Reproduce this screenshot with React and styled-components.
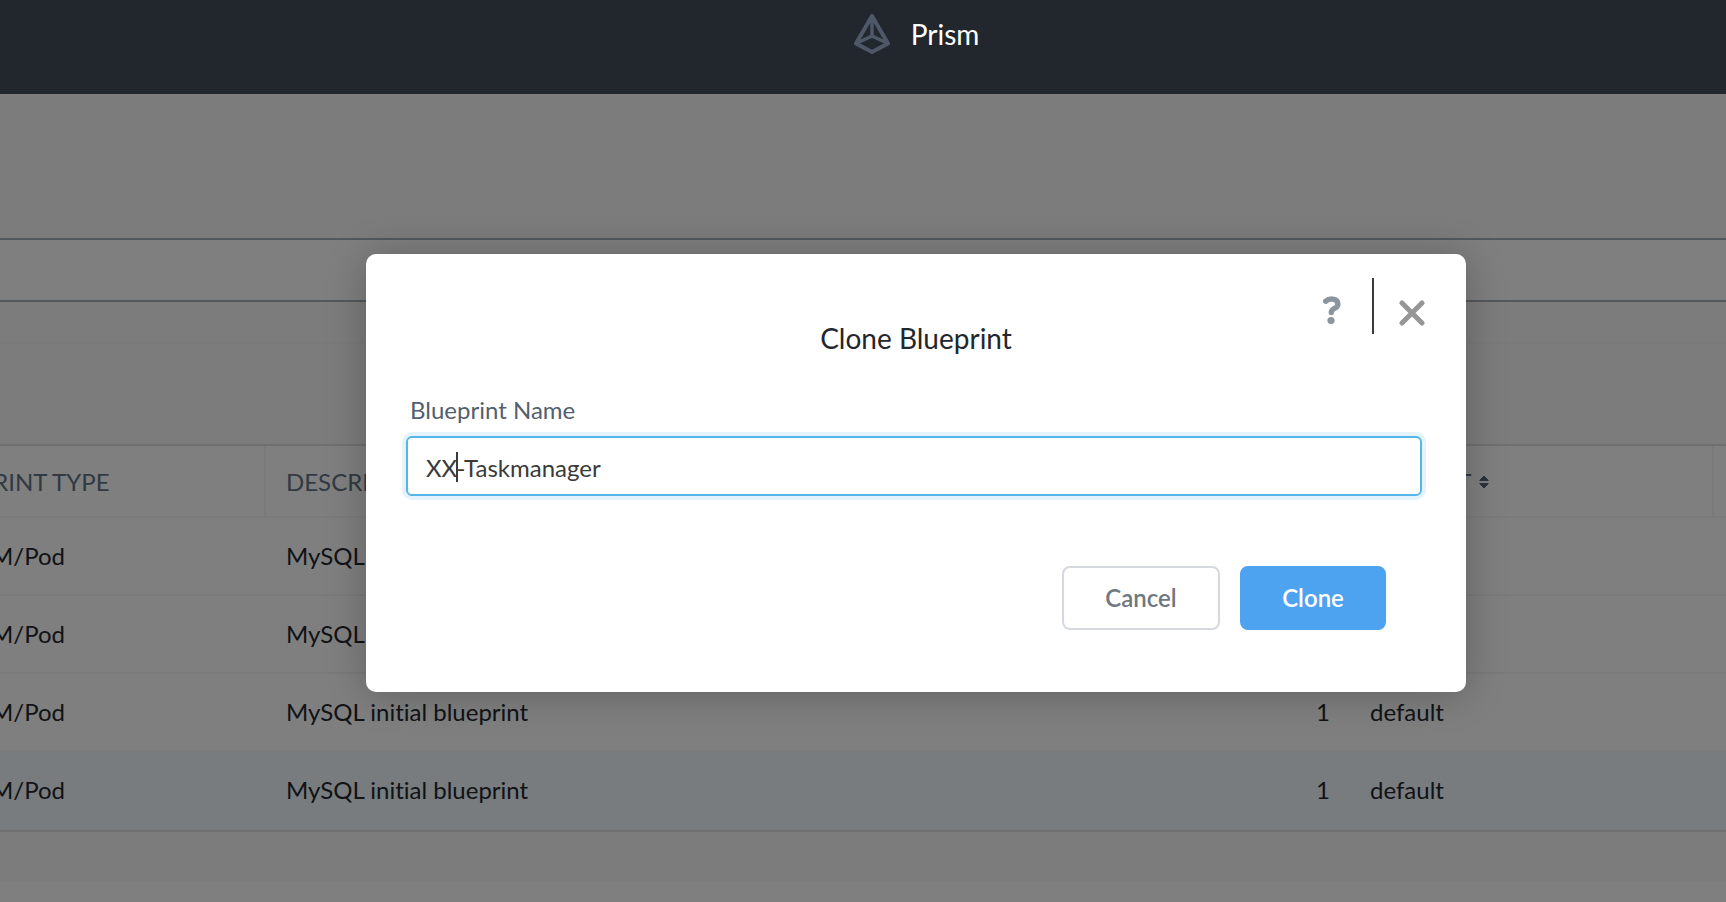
import React from "react";
import styled, { createGlobalStyle } from "styled-components";

const GlobalStyle = createGlobalStyle`
  *, *::before, *::after { box-sizing: border-box; }
  body {
    margin: 0;
    background: #ffffff;
    color: #22272e;
    font: 400 24px/32px Lato, "Liberation Sans", sans-serif;
    font-variant-ligatures: none;
  }
  button, input { font: inherit; font-variant-ligatures: none; }
`;

const Page = styled.div`
  position: relative;
  display: flex;
  flex-direction: column;
  min-height: 100vh;
  overflow: hidden;
`;

const Header = styled.header`
  position: relative;
  z-index: 2;
  display: flex;
  justify-content: center;
  align-items: flex-start;
  gap: 20px;
  height: 94px;
  padding: 12px 0 0 106px;
  background: #22272e;
  color: #ffffff;
  font-size: 28px;
  line-height: 44px;
`;

const Main = styled.main`
  flex: 1;
`;

const Spacer = styled.div`
  height: ${(p) => p.$height}px;
  background: #f8f8f8;
`;

const FilterBar = styled.div`
  height: 64px;
  border: solid #a4b0b8;
  border-width: 2px 0;
`;

const Toolbar = styled.div`
  height: 102px;
  background: #f8f8f8;
  border-top: 2px solid #f4f4f4;
`;

const TableClip = styled.div`
  overflow: hidden;
  border: solid #dedede;
  border-width: 2px 0;
`;

const Table = styled.table`
  width: calc(100% + 100px);
  margin-left: -100px;
  table-layout: fixed;
  border-collapse: separate;
  border-spacing: 0;
`;

const Row = styled.tr`
  background: ${(p) => (p.$selected ? "#f1f8fd" : "#ffffff")};
  &:last-child td { border-bottom-color: transparent; }
`;

const HeadCell = styled.th`
  height: 72px;
  padding: 2px 20px 0;
  border-bottom: 2px solid #f4f6f8;
  border-right: ${(p) => (p.$divided ? "2px solid #f2f4f6" : "0")};
  color: #627386;
  font-weight: 400;
  text-align: left;
  white-space: nowrap;
`;

const Cell = styled.td`
  height: 78px;
  padding: 0 20px;
  border-bottom: 2px solid #f4f4f4;
  text-align: ${(p) => p.$align || "left"};
  white-space: nowrap;
  &:first-child { padding-left: 14px; }
`;

const SortButton = styled.button`
  display: flex;
  align-items: center;
  gap: 8px;
  padding: 0;
  border: 0;
  background: none;
  color: inherit;
`;

const Scrim = styled.div`
  position: absolute;
  inset: 0;
  z-index: 1;
  padding: 254px 20px 0 126px;
  background: rgba(0, 0, 0, 0.5);
`;

const Dialog = styled.section`
  width: 100%;
  max-width: 1100px;
  margin: 0 auto;
  padding: 24px 40px 62px;
  border-radius: 10px;
  background: #ffffff;
  box-shadow: 0 2px 40px rgba(0, 0, 0, 0.24);
`;

const DialogHead = styled.header`
  display: grid;
  > * { grid-area: 1 / 1; }
`;

const DialogTools = styled.div`
  display: flex;
  justify-self: end;
  align-items: center;
  height: 56px;
`;

const IconButton = styled.button`
  display: flex;
  align-items: center;
  justify-content: center;
  width: 28px;
  height: 52px;
  padding: 14px 0 0;
  border: 0;
  background: none;
`;

const ToolDivider = styled.div`
  width: 2px;
  height: 56px;
  margin: 0 24px 0 26px;
  background: #3a3a3a;
`;

const DialogTitle = styled.h1`
  margin: 44px 0 0;
  color: #22272e;
  font-size: 28px;
  line-height: 32px;
  font-weight: 400;
  text-align: center;
`;

const Label = styled.label`
  display: block;
  margin: 40px 0 10px 4px;
  color: #525f70;
`;

const Field = styled.div`
  position: relative;
  margin-right: 4px;
`;

const NameInput = styled.input`
  display: block;
  width: 100%;
  height: 60px;
  padding: 2px 18px 0;
  border: 2px solid #56b6ea;
  border-radius: 6px;
  outline: 0;
  box-shadow: 0 0 0 4px #e5f4fc;
  background: #ffffff;
  color: #3a3a3a;
`;

const Caret = styled.span`
  position: absolute;
  top: 16px;
  left: 50px;
  width: 2px;
  height: 30px;
  background: #3a3a3a;
`;

const Actions = styled.div`
  display: flex;
  justify-content: flex-end;
  gap: 20px;
  margin: 70px 40px 0 0;
`;

const Button = styled.button`
  width: ${(p) => (p.$primary ? 146 : 158)}px;
  height: 64px;
  padding: 0;
  border: 2px solid ${(p) => (p.$primary ? "#4ea3f1" : "#d5d9df")};
  border-radius: 8px;
  background: ${(p) => (p.$primary ? "#4ea3f1" : "#ffffff")};
  color: ${(p) => (p.$primary ? "#ffffff" : "#6f7780")};
  font-weight: 600;
`;

const PrismLogo = () => (
  <svg width="38" height="42" viewBox="0 0 38 42" fill="none" stroke="#4e5869" strokeWidth="4" strokeLinejoin="round" aria-hidden="true">
    <path d="M19 4 3 31.5 19 40 35 31.5Z" />
    <path d="M19 4V24M3 31.5 19 24 35 31.5" strokeWidth="3.5" />
  </svg>
);

const SortIcon = () => (
  <svg width="10" height="14" viewBox="0 0 10 14" fill="#566373" aria-hidden="true">
    <path d="M5 1 9.3 5.4H.7ZM.7 8.6H9.3L5 13Z" stroke="#566373" strokeWidth="1" strokeLinejoin="round" />
  </svg>
);

const HelpIcon = () => (
  <svg width="20" height="36" viewBox="0 0 20 36" fill="none" aria-hidden="true">
    <path d="M3.7 6.2C6.5 3.6 16 2.2 15.9 9.3C15.8 14.2 9.3 12.6 9.3 17.5" stroke="#8b959e" strokeWidth="5.4" strokeLinecap="round" strokeLinejoin="round" />
    <circle cx="9" cy="25.5" r="3.6" fill="#8b959e" />
  </svg>
);

const CloseIcon = () => (
  <svg width="26" height="26" viewBox="0 0 26 26" fill="none" stroke="#969696" strokeWidth="5" strokeLinecap="round" aria-hidden="true">
    <path d="M3 3 23 23M23 3 3 23" />
  </svg>
);

const blueprints = [0, 1, 2, 3].map((id) => ({
  id,
  type: "Multi VM/Pod",
  description: "MySQL initial blueprint",
  count: 1,
  project: "default",
  selected: id === 3,
}));

export default function App() {
  return (
    <Page>
      <GlobalStyle />
      <Header>
        <PrismLogo />
        <span>Prism</span>
      </Header>
      <Main>
        <Spacer $height={144} />
        <FilterBar />
        <Spacer $height={40} />
        <Toolbar />
        <TableClip>
          <Table>
            <colgroup>
              <col style={{ width: 366 }} />
              <col />
              <col style={{ width: 80 }} />
              <col style={{ width: 364 }} />
              <col style={{ width: 12 }} />
            </colgroup>
            <thead>
              <tr>
                <HeadCell scope="col" $divided>BLUEPRINT TYPE</HeadCell>
                <HeadCell scope="col">DESCRIPTION</HeadCell>
                <HeadCell />
                <HeadCell scope="col" $divided>
                  <SortButton type="button">PROJECT <SortIcon /></SortButton>
                </HeadCell>
                <HeadCell />
              </tr>
            </thead>
            <tbody>
              {blueprints.map((b) => (
                <Row key={b.id} $selected={b.selected}>
                  <Cell>{b.type}</Cell>
                  <Cell>{b.description}</Cell>
                  <Cell $align="right">{b.count}</Cell>
                  <Cell>{b.project}</Cell>
                  <Cell />
                </Row>
              ))}
            </tbody>
          </Table>
        </TableClip>
        <Spacer $height={49} />
      </Main>
      <Scrim>
        <Dialog role="dialog" aria-modal="true" aria-labelledby="clone-title">
          <DialogHead>
            <DialogTitle id="clone-title">Clone Blueprint</DialogTitle>
            <DialogTools>
              <IconButton type="button" aria-label="Help"><HelpIcon /></IconButton>
              <ToolDivider />
              <IconButton type="button" aria-label="Close"><CloseIcon /></IconButton>
            </DialogTools>
          </DialogHead>
          <Label htmlFor="blueprint-name">Blueprint Name</Label>
          <Field>
            <NameInput id="blueprint-name" type="text" defaultValue="XX-Taskmanager" />
            <Caret />
          </Field>
          <Actions>
            <Button type="button">Cancel</Button>
            <Button type="button" $primary>Clone</Button>
          </Actions>
        </Dialog>
      </Scrim>
    </Page>
  );
}
